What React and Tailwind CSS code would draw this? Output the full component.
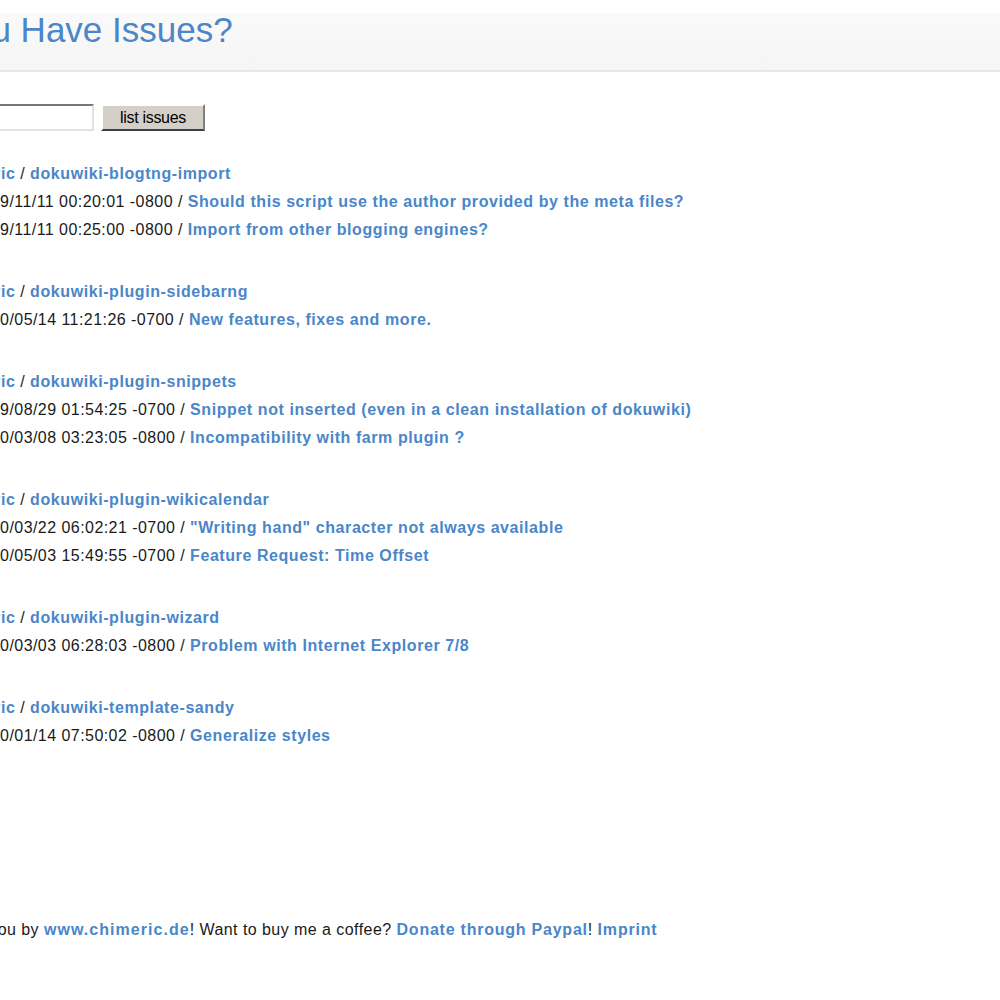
import React from 'react';

const groups = [
  {
    repo: 'dokuwiki-blogtng-import',
    issues: [
      ['2009/11/11 00:20:01 -0800', 'Should this script use the author provided by the meta files?'],
      ['2009/11/11 00:25:00 -0800', 'Import from other blogging engines?'],
    ],
  },
  {
    repo: 'dokuwiki-plugin-sidebarng',
    issues: [['2010/05/14 11:21:26 -0700', 'New features, fixes and more.']],
  },
  {
    repo: 'dokuwiki-plugin-snippets',
    issues: [
      ['2009/08/29 01:54:25 -0700', 'Snippet not inserted (even in a clean installation of dokuwiki)'],
      ['2010/03/08 03:23:05 -0800', 'Incompatibility with farm plugin ?'],
    ],
  },
  {
    repo: 'dokuwiki-plugin-wikicalendar',
    issues: [
      ['2010/03/22 06:02:21 -0700', '"Writing hand" character not always available'],
      ['2010/05/03 15:49:55 -0700', 'Feature Request: Time Offset'],
    ],
  },
  {
    repo: 'dokuwiki-plugin-wizard',
    issues: [['2010/03/03 06:28:03 -0800', 'Problem with Internet Explorer 7/8']],
  },
  {
    repo: 'dokuwiki-template-sandy',
    issues: [['2010/01/14 07:50:02 -0800', 'Generalize styles']],
  },
];

const link = 'font-bold text-[#4a86c8] tracking-[0.036em]';

export default function App() {
  return (
    <div className="min-h-[1000px] bg-white text-[16px] text-[#1a1a1a] tracking-[0.028em] font-['Liberation_Sans',Arial,sans-serif] overflow-hidden">
      <div className="flow-root mt-[13px] h-[59px] bg-gradient-to-b from-[#fafafa] to-[#f5f5f5] border-b-2 border-[#e6e6e6]">
        <h1 className="ml-[-102px] mt-[-3px] text-[35px] leading-[40px] tracking-normal text-[#4a86c8] whitespace-nowrap">
          Do You Have Issues?
        </h1>
      </div>

      <div className="ml-[-60px] mt-[32px] flex items-center gap-[7px]">
        <input
          type="text"
          className="w-[154px] h-[27px] bg-white border-2 border-t-[#777] border-l-[#777] border-b-[#e4e2da] border-r-[#e4e2da] outline-none"
        />
        <button className="w-[104px] h-[27px] bg-[#d4d0c8] border-2 border-t-white border-l-white border-b-[#404040] border-r-[#808080] text-[16px] text-black tracking-[-0.02em]">
          list issues
        </button>
      </div>

      <div className="ml-[-55px] mt-[29px]">
        {groups.map((g) => (
          <div key={g.repo} className="mb-[34px]">
            <div className="h-[28px] leading-[28px] whitespace-nowrap">
              <span className={link}>chimeric</span> / <span className={link}>{g.repo}</span>
            </div>
            {g.issues.map(([date, title]) => (
              <div key={title} className="ml-[27px] h-[28px] leading-[28px] whitespace-nowrap">
                {date} / <span className={link}>{title}</span>
              </div>
            ))}
          </div>
        ))}
      </div>

      <div className="ml-[-94px] mt-[168px] whitespace-nowrap">
        Brought to you by <span className="font-bold text-[#4a86c8] tracking-[0.065em]">www.chimeric.de</span>! Want to buy
        me a coffee? <span className="font-bold text-[#4a86c8] tracking-[0.048em]">Donate through Paypal</span>!{' '}
        <span className="font-bold text-[#4a86c8] tracking-[0.05em]">Imprint</span>
      </div>
    </div>
  );
}
